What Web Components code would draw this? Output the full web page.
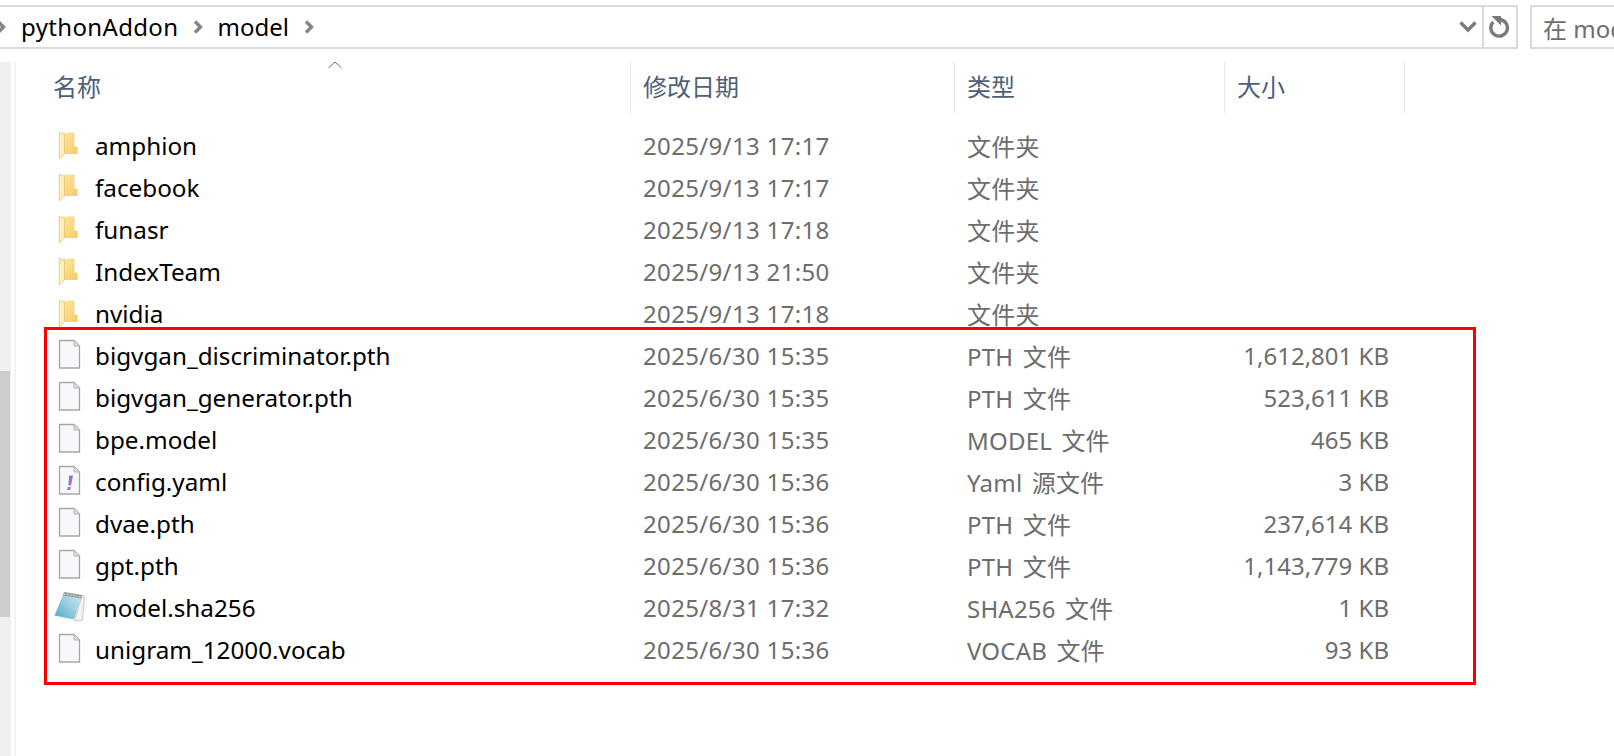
<!DOCTYPE html>
<html lang="zh">
<head>
<meta charset="utf-8">
<title>model</title>
<style>
  html, body { margin: 0; height: 100%; background: #fff; overflow: hidden; }
  body { font-family: "Noto Sans", "Noto Sans CJK SC", sans-serif; }
</style>
</head>
<body>
<explorer-window>
  <address-bar slot="top">
    <path-crumb style="letter-spacing: .35px">pythonAddon</path-crumb>
    <path-crumb>model</path-crumb>
  </address-bar>
  <file-list>
    <file-row icon="folder" name="amphion" date="2025/9/13 17:17" type="文件夹"></file-row>
    <file-row icon="folder" name="facebook" date="2025/9/13 17:17" type="文件夹"></file-row>
    <file-row icon="folder" name="funasr" date="2025/9/13 17:18" type="文件夹"></file-row>
    <file-row icon="folder" name="IndexTeam" date="2025/9/13 21:50" type="文件夹"></file-row>
    <file-row icon="folder" name="nvidia" date="2025/9/13 17:18" type="文件夹"></file-row>
    <file-row icon="file" name="bigvgan_discriminator.pth" date="2025/6/30 15:35" type="PTH 文件" size="1,612,801 KB"></file-row>
    <file-row icon="file" name="bigvgan_generator.pth" date="2025/6/30 15:35" type="PTH 文件" size="523,611 KB"></file-row>
    <file-row icon="file" name="bpe.model" date="2025/6/30 15:35" type="MODEL 文件" size="465 KB"></file-row>
    <file-row icon="yaml" name="config.yaml" date="2025/6/30 15:36" type="Yaml 源文件" size="3 KB"></file-row>
    <file-row icon="file" name="dvae.pth" date="2025/6/30 15:36" type="PTH 文件" size="237,614 KB"></file-row>
    <file-row icon="file" name="gpt.pth" date="2025/6/30 15:36" type="PTH 文件" size="1,143,779 KB"></file-row>
    <file-row icon="note" name="model.sha256" date="2025/8/31 17:32" type="SHA256 文件" size="1 KB"></file-row>
    <file-row icon="file" name="unigram_12000.vocab" date="2025/6/30 15:36" type="VOCAB 文件" size="93 KB"></file-row>
  </file-list>
</explorer-window>

<script>
const CHEVRON = `<svg width="10" height="14" viewBox="0 0 10 14"><path d="M2 1.500 7.500 7 2 12.500" fill="none" stroke="#858585" stroke-width="3.400"/></svg>`;

// 外框: 地址栏 + 滚动条 + 列表
class ExplorerWindow extends HTMLElement {
  constructor() {
    super();
    this.attachShadow({ mode: 'open' });
    this.shadowRoot.innerHTML = `
    <style>
      :host { display: block; position: relative; width: 1614px; height: 756px; padding-top: 5px; box-sizing: border-box; background: #fff; overflow: hidden; }
      .body { display: flex; height: 695px; margin-top: 13px; }
      .track { width: 11px; background: #f0f0f0; padding-top: 309px; box-sizing: border-box; flex: none; }
      .thumb { width: 10px; height: 246px; background: #cdcdcd; }
      .edge { width: 3px; border-right: 2px solid #f3f3f3; flex: none; }
      .main { flex: 1; min-width: 0; }
      /* 红框是截图上后加的标注 */
      .mark { position: absolute; left: 44px; top: 327px; width: 1426px; height: 352px; border: 3px solid #fe0000; pointer-events: none; }
    </style>
    <slot name="top"></slot>
    <div class="body">
      <div class="track"><div class="thumb"></div></div>
      <div class="edge"></div>
      <div class="main"><slot></slot></div>
    </div>
    <div class="mark"></div>
    `;
  }
}

class AddressBar extends HTMLElement {
  constructor() {
    super();
    this.attachShadow({ mode: 'open' });
    this.shadowRoot.innerHTML = `
    <style>
      :host { display: flex; height: 44px; align-items: stretch; }
      .path { width: 1484px; flex: none; display: flex; align-items: center; box-sizing: border-box; border: 2px solid #d9d9d9; border-left: 0; }
      .start { display: flex; margin-left: -4px; margin-right: 15px; }
      .crumbs { display: flex; align-items: center; flex: 1; padding-bottom: 2px; box-sizing: border-box; height: 100%; }
      .drop { width: 26px; margin-right: 1px; display: flex; align-items: center; justify-content: center; }
      .refresh { width: 34px; flex: none; box-sizing: border-box; border: 2px solid #d9d9d9; border-left: 0; display: flex; align-items: center; justify-content: center; }
      .search { margin-left: 12px; flex: 1; box-sizing: border-box; border: 2px solid #d9d9d9; border-right: 0; padding-left: 11px; display: flex; align-items: center; font-size: 24px; color: #6d6d6d; white-space: nowrap; overflow: hidden; }
    </style>
    <div class="path">
      <span class="start">${CHEVRON}</span>
      <div class="crumbs"><slot></slot></div>
      <span class="drop"><svg width="18" height="12" viewBox="0 0 18 12"><path d="M1.500 1.500 9 9 16.500 1.500" fill="none" stroke="#7a7a7a" stroke-width="3.400"/></svg></span>
    </div>
    <div class="refresh"><svg width="22" height="22" viewBox="0 0 22 22"><path d="M10 3.500A8.300 8.300 0 1 1 4.200 6" fill="none" stroke="#7a7a7a" stroke-width="3.400" /><path d="M2.500 0h9.500v9.500z" fill="#7a7a7a"/></svg></div>
    <div class="search">在 model</div>
    `;
  }
}

class PathCrumb extends HTMLElement {
  constructor() {
    super();
    this.attachShadow({ mode: 'open' });
    this.shadowRoot.innerHTML = `
    <style>
      :host { display: flex; align-items: center; font-size: 24px; color: #000; }
      .sep { display: flex; margin: 2px 14px 0 15px; }
    </style>
    <slot></slot><span class="sep">${CHEVRON}</span>
    `;
  }
}

class FileList extends HTMLElement {
  constructor() {
    super();
    this.attachShadow({ mode: 'open' });
    this.shadowRoot.innerHTML = `
    <style>
      :host { display: block; --cols: 615px 324px 270px 180px; }
      .head { display: grid; grid-template-columns: var(--cols); height: 51px; position: relative; }
      .cell { border-right: 1px solid #e5e5e5; padding: 0 0 4px 12px; display: flex; align-items: center; font-size: 24px; color: #4c607a; box-sizing: border-box; }
      .cell.first { padding-left: 37px; }
      .sort { position: absolute; left: 312px; top: -1px; }
      .rows { padding-top: 11px; }
    </style>
    <div class="head">
      <div class="cell first">名称</div>
      <div class="cell">修改日期</div>
      <div class="cell">类型</div>
      <div class="cell">大小</div>
      <svg class="sort" width="14" height="8" viewBox="0 0 14 8"><path d="M.5 7 7 1l6.500 6" fill="none" stroke="#6d6d6d" stroke-width="1"/></svg>
    </div>
    <div class="rows"><slot></slot></div>
    `;
  }
}

const ICONS = {
  folder: `<svg width="30" height="32" viewBox="0 0 30 32">
    <defs>
      <linearGradient id="f" x1="0" y1="0" x2="1" y2="1"><stop offset="0" stop-color="#fce7a0"/><stop offset="1" stop-color="#f5cc65"/></linearGradient>
    </defs>
    <path d="M10.500 3.500h10.500v14.500h3.200v7H10.500z" fill="url(#f)"/>
    <path d="M21 3.500v14.500h3.200v7" fill="none" stroke="#efd083" stroke-width=".8"/>
    <path d="M6.300 3.200 11.500 5.500V25L6.300 30z" fill="#feeebb" stroke="#e6c370" stroke-width=".8"/>
  </svg>`,
  file: `<svg width="30" height="32" viewBox="0 0 30 32">
    <path d="M6.500 1.500h14.500l5.500 5.500v22H6.500z" fill="#f6f8fb" stroke="#a6a6a6" stroke-width="1.300"/>
    <path d="M21 1.500v5.500h5.500z" fill="#e2e2e2" stroke="#b5b5b5"/>
  </svg>`,
  yaml: `<svg width="30" height="32" viewBox="0 0 30 32">
    <path d="M6.500 1.500h14.500l5.500 5.500v22H6.500z" fill="#f6f8fb" stroke="#a6a6a6" stroke-width="1.300"/>
    <path d="M21 1.500v5.500h5.500z" fill="#e2e2e2" stroke="#b5b5b5"/>
    <path d="M16.200 10.500h3.800l-2 10h-2.600zM14.800 22h3l-.6 3h-3z" fill="#9b72bd"/>
  </svg>`,
  note: `<svg width="34" height="32" viewBox="0 0 34 32">
    <defs><linearGradient id="n" x1="0" y1="1" x2="1" y2="0"><stop offset="0" stop-color="#4fa6c2"/><stop offset=".55" stop-color="#9dd0e0"/><stop offset="1" stop-color="#d2ebf2"/></linearGradient></defs>
    <path d="M29 4l2.500 1.500L29.500 29.500l-8 .5z" fill="#f4f2ea" stroke="#b5b5b0" stroke-width=".7"/>
    <path d="M11 1.500 29 4.500 21 28.500 1.500 24.500z" fill="url(#n)"/>
    <path d="M11 1 29.500 4 28.500 7.500 9.800 4.500z" fill="#9aa09c"/>
    <path d="M11 3 29 6" stroke="#dfe3df" stroke-width=".8" stroke-dasharray="1.500 1.500"/>
  </svg>`,
};

class FileIcon extends HTMLElement {
  constructor() {
    super();
    this.attachShadow({ mode: 'open' });
  }
  connectedCallback() {
    const kind = this.getAttribute('kind') || 'file';
    this.shadowRoot.innerHTML = `
    <style>:host { display: flex; width: 34px; height: 32px; justify-content: flex-start; }</style>
    ${ICONS[kind]}
    `;
  }
}

class FileRow extends HTMLElement {
  constructor() {
    super();
    this.attachShadow({ mode: 'open' });
  }
  connectedCallback() {
    const a = (n) => this.getAttribute(n) || '';
    this.shadowRoot.innerHTML = `
    <style>
      :host { display: grid; grid-template-columns: 615px 324px 270px 164px; height: 42px; align-items: center; font-size: 24px; color: #6d6d6d; white-space: nowrap; }
      .name { display: flex; align-items: center; padding-left: 37px; gap: 8px; color: #000; font-size: 24.25px; }
      .date, .type { padding-left: 12px; }
      .date { letter-spacing: .34px; }
      .type { letter-spacing: .2px; word-spacing: 3px; }
      .size { text-align: right; }
    </style>
    <div class="name"><file-icon kind="${a('icon')}"></file-icon><span>${a('name')}</span></div>
    <div class="date">${a('date')}</div>
    <div class="type">${a('type')}</div>
    <div class="size">${a('size')}</div>
    `;
  }
}

customElements.define('explorer-window', ExplorerWindow);
customElements.define('address-bar', AddressBar);
customElements.define('path-crumb', PathCrumb);
customElements.define('file-list', FileList);
customElements.define('file-icon', FileIcon);
customElements.define('file-row', FileRow);
</script>
</body>
</html>
